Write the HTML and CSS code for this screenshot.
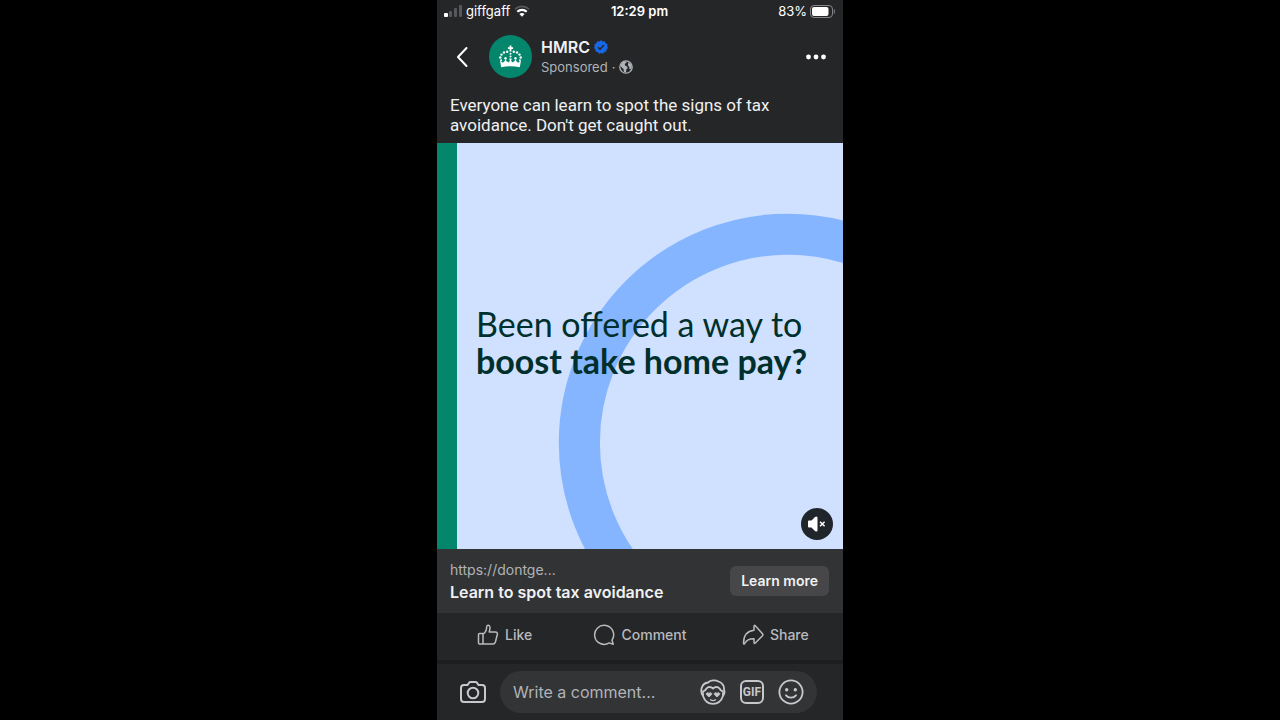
FILE: index.html
```
<!DOCTYPE html>
<html lang="en">
<head>
  <meta charset="UTF-8">
  <meta name="viewport" content="width=device-width, initial-scale=1.0">
  <title>HMRC - Sponsored post</title>
  <link rel="stylesheet" href="styles.css">
</head>
<body>
  <main class="phone">
    <!-- Status bar -->
    <div class="status-bar">
      <div class="carrier">
        <svg width="18" height="12" viewBox="0 0 18 12" aria-hidden="true">
          <rect x="0" y="8" width="4" height="4" rx="1" fill="#fff"/>
          <rect x="5" y="6" width="3" height="6" rx="1" fill="#56575a"/>
          <rect x="10" y="3" width="3" height="9" rx="1" fill="#56575a"/>
          <rect x="15" y="0" width="3" height="12" rx="1" fill="#56575a"/>
        </svg>
        <span>giffgaff</span>
        <svg width="16" height="12" viewBox="0 0 16 12" fill="none" aria-hidden="true">
          <path d="M1 4.2C5 .4 11 .4 15 4.2" stroke="#56575a" stroke-width="1.8"/>
          <path d="M3.3 6.8c2.7-2.6 6.7-2.6 9.4 0" stroke="#fff" stroke-width="2.2"/>
          <path d="M5.4 9c1.5-1.5 3.7-1.5 5.2 0L8 11.8z" fill="#fff"/>
        </svg>
      </div>
      <time class="clock">12:29 pm</time>
      <div class="battery">
        <span>83%</span>
        <svg width="25" height="13" viewBox="0 0 25 13" fill="none" aria-hidden="true">
          <rect x=".5" y=".5" width="22" height="12" rx="3.5" stroke="#85868a"/>
          <rect x="2" y="2" width="16.5" height="9" rx="2" fill="#fff"/>
          <path d="M24.3 4.8v3.4" stroke="#85868a" stroke-linecap="round"/>
        </svg>
      </div>
    </div>

    <!-- Post header -->
    <header class="post-header">
      <button class="icon-btn back" aria-label="Back">
        <svg width="14" height="22" viewBox="0 0 14 22" fill="none" stroke="#fff" stroke-width="2" stroke-linecap="round" stroke-linejoin="round"><path d="M10.500 2L2 11 10.500 20"/></svg>
      </button>
      <svg class="avatar" viewBox="0 0 43 43" role="img" aria-label="HMRC">
        <circle cx="21.500" cy="21.500" r="21.500" fill="#04866d"/>
        <g fill="#fff">
          <path d="M20.600 10.500h1.800v1.700h1.700v1.700h-1.700v2.600h-1.800v-2.600h-1.700v-1.700h1.700z"/>
          <circle cx="21.500" cy="18.800" r="1"/>
          <circle cx="21.500" cy="21.500" r="1"/>
          <circle cx="18.200" cy="16.800" r="1.200"/>
          <circle cx="15" cy="17.500" r="1.200"/>
          <circle cx="12.500" cy="19.600" r="1.200"/>
          <circle cx="11.300" cy="22.500" r="1.200"/>
          <circle cx="12.100" cy="25.300" r="1"/>
          <circle cx="24.800" cy="16.800" r="1.200"/>
          <circle cx="28" cy="17.500" r="1.200"/>
          <circle cx="30.500" cy="19.600" r="1.200"/>
          <circle cx="31.700" cy="22.500" r="1.200"/>
          <circle cx="30.900" cy="25.300" r="1"/>
          <circle cx="16.500" cy="23.300" r="1.200"/>
          <circle cx="26.500" cy="23.300" r="1.200"/>
          <path d="M11 25.500l3 2.200 1.200-1.500h.7v-1.700h1.300v1.700h.8l1.200 1.200 1.700-1.400-.7-2.500h2.600l-.7 2.500 1.700 1.400 1.200-1.200h.8v-1.700h1.300v1.700h.7l1.200 1.500 3-2.200-1.200 6.700c-5.800-1.300-12.800-1.300-18.600 0z"/>
        </g>
      </svg>
      <div class="author">
        <h1 class="author-name">HMRC
          <svg width="14" height="14" viewBox="0 0 14 14" role="img" aria-label="Verified">
            <path d="M7 .3l1.700 1.200 2.100-.2.800 1.900 1.900 1-.3 2.100.8 1.700-1.500 1.500-.2 2.100-2.100.5-1.300 1.600L7 13l-1.900.7-1.300-1.600-2.100-.5-.2-2.100L0 8l.8-1.700-.3-2.100 1.900-1 .8-1.900 2.100.2z" fill="#1769e8"/>
            <path d="M4 7.200l2 2 4-4.200" fill="none" stroke="#242526" stroke-width="1.500"/>
          </svg>
        </h1>
        <p class="sponsored">Sponsored <span>·</span>
          <svg width="14" height="14" viewBox="0 0 14 14" role="img" aria-label="Public">
            <circle cx="7" cy="7" r="6.200" fill="none" stroke="#b0b3b8" stroke-width="1.300"/>
            <path d="M1.500 5L4 2l3.200-.8.3 1.600-1.700 1 .2 1.700 2 .9.800 1.600-1.500 1.600-.3 3-2-.6-.6-3.200-1.800-1.300zM9.300 2.200l2.700 2 .8 3-1.600 2.300-1-.8.200-1.800-1.500-1.500z" fill="#b0b3b8"/>
          </svg>
        </p>
      </div>
      <button class="icon-btn more" aria-label="More options">
        <svg width="20" height="6" viewBox="0 0 20 6" fill="#fff"><circle cx="2.500" cy="3" r="2.400"/><circle cx="10" cy="3" r="2.400"/><circle cx="17.500" cy="3" r="2.400"/></svg>
      </button>
    </header>

    <p class="message">Everyone can learn to spot the signs of tax avoidance. Don't get caught out.</p>

    <!-- Video -->
    <section class="media">
      <svg class="ring" viewBox="0 0 405 405" aria-hidden="true">
        <circle cx="350" cy="299" r="208" fill="none" stroke="#86b5ff" stroke-width="41"/>
      </svg>
      <h2 class="headline">Been offered a way to <strong>boost take home pay?</strong></h2>
      <button class="mute" aria-label="Unmute">
        <svg width="20" height="18" viewBox="0 0 20 18" fill="none">
          <path d="M2 5.500h2.500L8 2q2.500-1.500 2.500 1v12q0 2.500-2.500 1L4.500 12.500H2q-1 0-1-1v-5q0-1 1-1z" fill="#fff"/>
          <path d="M13 6.700l4.600 4.600M17.600 6.700l-4.600 4.600" stroke="#fff" stroke-width="1.500"/>
        </svg>
      </button>
    </section>

    <!-- Link preview -->
    <section class="link-card">
      <div class="link-text">
        <p class="link-url">https://dontge...</p>
        <p class="link-title">Learn to spot tax avoidance</p>
      </div>
      <button class="learn-more">Learn more</button>
    </section>

    <!-- Reactions -->
    <div class="actions">
      <button class="action">
        <svg width="22" height="22" viewBox="0 0 22 22" fill="none" stroke="#b8babe" stroke-width="1.500" stroke-linejoin="round"><path d="M6 9.500H2.500q-1 0-1 1v8.500q0 1 1 1H6zM6 10c3-1.500 3.500-4 3.700-7 .1-2.700 3.300-2.200 3.300.7 0 1.800-.4 3-.8 4.300h6c2 0 2.600 1.500 2 3l-1.800 7q-.6 2-2.500 2H6"/></svg>
        Like
      </button>
      <button class="action">
        <svg width="22" height="22" viewBox="0 0 22 22" fill="none" stroke="#b8babe" stroke-width="1.500" stroke-linejoin="round"><path d="M19 16.200A9.500 9.500 0 1 0 16.200 18.900L20.200 20.200z"/></svg>
        Comment
      </button>
      <button class="action">
        <svg width="22" height="22" viewBox="0 0 22 22" fill="none" stroke="#b8babe" stroke-width="1.500" stroke-linejoin="round"><path d="M12 2.200q.2-1.400 1.300-.5l7.200 8q.8 1 0 2l-7.200 7.300q-1.200 1-1.300-.6v-3.600c-4.500-.2-7.300 1.200-9.300 4.700q-1 1.300-1.200-.2C1.500 12.500 4.500 7.200 12 6.300z"/></svg>
        Share
      </button>
    </div>

    <!-- Comment box -->
    <form class="comment-bar">
      <button type="button" class="icon-btn" aria-label="Add photo">
        <svg width="26" height="24" viewBox="0 0 26 24" fill="none" stroke="#c6c8cb" stroke-width="2"><path d="M4 5h3.500l1.600-2.300q.5-.7 1.400-.7h5q.9 0 1.400.7L18.500 5H22q3 0 3 3v11q0 3-3 3H4q-3 0-3-3V8q0-3 3-3z"/><circle cx="13" cy="13" r="5.300"/></svg>
      </button>
      <div class="comment-field">
        <input type="text" class="comment-input" placeholder="Write a comment..." aria-label="Write a comment">
        <button type="button" class="icon-btn" aria-label="Avatar stickers">
          <svg width="26" height="26" viewBox="0 0 26 26" fill="none" stroke="#c6c8cb" stroke-width="1.800" stroke-linejoin="round">
            <path d="M3 17C.8 14.500.8 10 2.300 7.500 3.500 4.500 6 3.800 8 3.500 10.500 1 15.500.8 18.500 2.500 22 3.500 24.500 7 24 10.500c.8 2 .5 4.700-1 6.500C21.500 21.500 18 24.800 13 24.800S4.500 21.500 3 17z"/>
            <path d="M3 17V12.500c2-.3 2.800-1.700 3.500-3C8 7.500 11 7.500 13 9.500c2-2 5-2 6.500 0 .7 1.300 1.500 2.700 3.500 3V17"/>
            <path d="M9 18l-2.500-2.300c-1.100-1.500 1.200-3 2.500-1.300 1.300-1.700 3.600-.2 2.500 1.300zM17 18l-2.500-2.300c-1.100-1.500 1.200-3 2.500-1.300 1.300-1.700 3.600-.2 2.500 1.300z" fill="#c6c8cb" stroke-width=".8"/>
            <path d="M10.500 20.800c1.500 1 3.500 1 5 0" stroke-width="1.300" stroke-linecap="round"/>
          </svg>
        </button>
        <button type="button" class="icon-btn gif">GIF</button>
        <button type="button" class="icon-btn" aria-label="Emoji">
          <svg width="26" height="26" viewBox="0 0 26 26" fill="none" stroke="#c6c8cb" stroke-width="1.800" stroke-linecap="round">
            <circle cx="13" cy="13" r="11.600"/>
            <circle cx="8.700" cy="10.700" r="1.700" fill="#c6c8cb" stroke="none"/>
            <circle cx="17.300" cy="10.700" r="1.700" fill="#c6c8cb" stroke="none"/>
            <path d="M8 16.300c2.500 3 7.500 3 10 0"/>
          </svg>
        </button>
      </div>
    </form>
  </main>
</body>
</html>
```

FILE: styles.css
```
/* Reset */
* {
  margin: 0;
  padding: 0;
  box-sizing: border-box;
}

body {
  background: #000;
  color: #f0f1f3;
  font-family: Inter, "Liberation Sans", sans-serif;
}

button {
  border: 0;
  background: none;
  color: inherit;
  font: inherit;
  cursor: pointer;
}

svg {
  display: block;
}

.phone {
  max-width: 406px;
  min-height: 100vh;
  margin: 0 auto;
  background: #252628;
  display: flex;
  flex-direction: column;
}

.icon-btn {
  display: flex;
  align-items: center;
  justify-content: center;
  flex: none;
}

/* Status bar */
.status-bar {
  display: grid;
  grid-template-columns: 1fr auto 1fr;
  align-items: center;
  padding: 3px 8px 0 7px;
  font-size: 13px;
  line-height: 16px;
  color: #fff;
}

.carrier,
.battery {
  display: flex;
  align-items: center;
  gap: 4px;
}

.battery {
  justify-content: flex-end;
  gap: 3px;
}

.clock {
  font-weight: 600;
}

/* Post header */
.post-header {
  display: flex;
  align-items: center;
  padding: 16px 17px 17px 16px;
}

.back {
  width: 20px;
  margin-right: 16px;
}

.avatar {
  width: 43px;
  height: 43px;
  margin-right: 9px;
}

.author {
  flex: 1;
}

.author-name {
  display: flex;
  align-items: center;
  gap: 4px;
  font-size: 16px;
  font-weight: 600;
  line-height: 20px;
}

.sponsored {
  display: flex;
  align-items: center;
  gap: 4px;
  font-size: 13px;
  line-height: 20px;
  color: #b0b3b8;
}

.message {
  padding: 0 60px 8px 13px;
  font-family: Roboto, sans-serif;
  font-size: 17px;
  line-height: 20px;
}

/* Video */
.media {
  position: relative;
  aspect-ratio: 1;
  padding: 0 19px 8px;
  border-left: 20px solid #04866d;
  background: #cfe1ff;
  display: flex;
  align-items: center;
  overflow: hidden;
}

.ring {
  position: absolute;
  top: 0;
  right: 0;
  height: 100%;
}

.headline {
  position: relative;
  font-family: Lato, sans-serif;
  font-size: 34px;
  font-weight: 400;
  line-height: 37px;
  color: #00302d;
  white-space: nowrap;
}

.headline strong {
  display: block;
}

.mute {
  position: absolute;
  right: 10px;
  bottom: 9px;
  width: 32px;
  height: 32px;
  border-radius: 50%;
  background: #20242b;
  display: flex;
  align-items: center;
  justify-content: center;
}

/* Link preview */
.link-card {
  display: flex;
  align-items: center;
  justify-content: space-between;
  padding: 10px 14px 10px 13px;
  background: #323335;
}

.link-url {
  font-size: 14px;
  line-height: 22px;
  color: #b0b3b8;
}

.link-title {
  font-size: 16px;
  font-weight: 600;
  line-height: 22px;
}

.learn-more {
  padding: 0 11px;
  border-radius: 6px;
  background: #474749;
  font-size: 14px;
  font-weight: 600;
  line-height: 30px;
}

/* Reactions */
.actions {
  display: grid;
  grid-template-columns: repeat(3, 1fr);
  padding: 10px 0 13px;
  border-bottom: 4px solid #1d1e20;
}

.action {
  display: flex;
  align-items: center;
  justify-content: center;
  gap: 6px;
  font-size: 14px;
  font-weight: 500;
  line-height: 24px;
  color: #b8babe;
}

/* Comment box */
.comment-bar {
  flex: 1;
  display: flex;
  align-items: center;
  gap: 14px;
  padding: 0 26px 0 23px;
}

.comment-field {
  flex: 1;
  min-width: 0;
  display: flex;
  align-items: center;
  gap: 14px;
  padding: 0 13px;
  border-radius: 21px;
  background: #333436;
}

.comment-input {
  flex: 1;
  min-width: 0;
  height: 42px;
  border: 0;
  outline: none;
  background: none;
  color: #e4e6eb;
  font: 16px Inter, "Liberation Sans", sans-serif;
}

.comment-input::placeholder {
  color: #b0b3b8;
}

.gif {
  width: 24px;
  height: 24px;
  border: 2px solid #c6c8cb;
  border-radius: 6px;
  color: #c6c8cb;
  font-family: Roboto, sans-serif;
  font-size: 12px;
  font-weight: 700;
}
```
